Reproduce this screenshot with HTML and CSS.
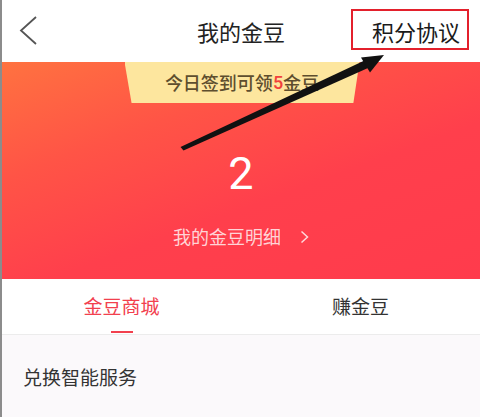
FILE: index.html
```html
<!DOCTYPE html>
<html lang="zh-CN">
<head>
<meta charset="utf-8">
<title>我的金豆</title>
<link rel="stylesheet" href="styles.css">
</head>
<body>
<div class="page">
  <header class="topbar">
    <div class="back">
      <svg width="20" height="32" viewBox="0 0 20 32"><polyline points="17,2 2,15.5 17,29" fill="none" stroke="#555" stroke-width="1.8"/></svg>
    </div>
    <h1 class="title">我的金豆</h1>
    <div class="agreement">积分协议</div>
  </header>

  <section class="banner">
    <div class="signin">今日签到可领<span class="hl">5</span>金豆</div>
    <div class="amount">2</div>
    <div class="detail">我的金豆明细
      <svg class="chev" width="9" height="14" viewBox="0 0 9 14"><polyline points="1.5,1.5 7.5,7 1.5,12.5" fill="none" stroke="rgba(255,255,255,0.8)" stroke-width="1.5"/></svg>
    </div>
  </section>

  <nav class="tabs">
    <div class="tab active"><span class="tab-label">金豆商城</span><span class="tab-line"></span></div>
    <div class="tab"><span class="tab-label">赚金豆</span><span class="tab-line"></span></div>
  </nav>

  <main class="content">
    <div class="section-title">兑换智能服务</div>
  </main>

  <div class="mark-box"></div>
  <svg class="mark-arrow" width="480" height="417" viewBox="0 0 480 417">
    <polygon points="180.5,147 183.5,150.5 368,68 364.5,60.5" fill="#111"/>
    <polygon points="384,55 361,57.5 370,72.5" fill="#111"/>
  </svg>
</div>
</body>
</html>
```

FILE: styles.css
```css
* { box-sizing: border-box; margin: 0; padding: 0; }
html, body { width: 480px; height: 417px; overflow: hidden; }
body {
  font-family: "Noto Sans CJK SC", "Noto Sans", sans-serif;
  background: #fbf9fb;
}
.page {
  position: relative;
  width: 480px;
  height: 417px;
  border-left: 2px solid #8c8c8c;
  background: #fbf9fb;
  overflow: hidden;
}
.topbar {
  height: 62px;
  background: #fff;
  display: flex;
  align-items: center;
  position: relative;
}
.back {
  width: 120px;
  padding-left: 17px;
  display: flex;
  align-items: center;
  margin-top: -1px;
}
.title {
  flex: 1;
  text-align: center;
  font-size: 22px;
  font-weight: 400;
  color: #222;
  line-height: 30px;
}
.agreement {
  width: 120px;
  text-align: right;
  padding-right: 20px;
  font-size: 22px;
  color: #1a1a1a;
  line-height: 30px;
}
.banner {
  height: 217px;
  background: linear-gradient(160deg, #ff7240 0%, #ff5446 30%, #ff3f4c 60%, #ff3b4c 100%);
  display: flex;
  flex-direction: column;
  align-items: center;
}
.signin {
  width: 235px;
  height: 41px;
  background: #fde69e;
  clip-path: polygon(0 0, 100% 0, 97.4% 100%, 3% 100%);
  display: flex;
  align-items: center;
  justify-content: center;
  font-size: 18px;
  font-weight: 500;
  color: #5e4e2e;
  padding-bottom: 1px;
  margin-left: 2px;
}
.hl { color: #f2413c; font-family: Roboto, "Noto Sans", sans-serif; }
.amount {
  margin-top: 46px;
  font-family: Roboto, "Noto Sans", sans-serif;
  font-weight: 400;
  font-size: 45px;
  line-height: 50px;
  color: #fff;
}
.detail {
  margin-top: 25px;
  font-size: 18px;
  line-height: 24px;
  color: rgba(255, 255, 255, 0.78);
  display: flex;
  align-items: center;
  gap: 19px;
}
.chev { margin-top: 1px; }
.tabs {
  height: 56px;
  background: #fff;
  border-bottom: 1px solid #ececec;
  display: flex;
}
.tab {
  flex: 1;
  display: flex;
  flex-direction: column;
  align-items: center;
}
.tab-label {
  flex: 1;
  display: flex;
  align-items: center;
  font-size: 19px;
  color: #333;
  padding-top: 1px;
}
.tab.active .tab-label { color: #f2404e; }
.tab-line {
  width: 22px;
  height: 2px;
  margin-bottom: 1px;
}
.tab.active .tab-line { background: #f2404e; }
.content {
  padding: 29px 0 0 21px;
}
.section-title {
  font-size: 19px;
  line-height: 26px;
  color: #333;
}
.mark-box {
  position: absolute;
  left: 349px;
  top: 9px;
  width: 118px;
  height: 41px;
  border: 2px solid #e3202c;
}
.mark-arrow {
  position: absolute;
  left: -2px;
  top: 0;
  pointer-events: none;
}
```
